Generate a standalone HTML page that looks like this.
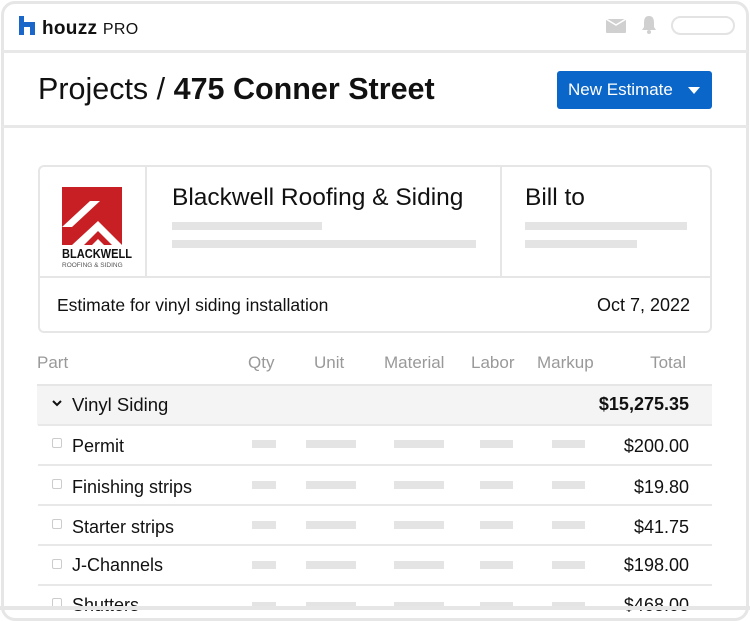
<!DOCTYPE html>
<html><head><style>
*{margin:0;padding:0;box-sizing:border-box}
body{width:750px;height:610px;background:#fff;font-family:"Liberation Sans",sans-serif;color:#111;position:relative;overflow:hidden}
.a{position:absolute}
.frame{position:absolute;left:1px;top:1px;width:748px;height:620px;border:3px solid #e6e6e6;border-radius:14px}
.hl{position:absolute;left:2px;width:746px;height:3px;background:#e8e8e8}
.bar{position:absolute;height:8px;background:#e4e4e4}
.t{position:absolute;white-space:nowrap}
.r{position:absolute;white-space:nowrap;right:61px;text-align:right;font-size:18px}
.row{position:absolute;left:38px;width:674px;height:2px;background:#e8e8e8}
.cb{position:absolute;left:52px;width:10px;height:10px;border:1px solid #ccc;border-radius:2px}
.hd{position:absolute;top:353px;font-size:17px;color:#999}
</style></head><body>
<div class="frame"></div>
<svg class="a" style="left:19px;top:16px" width="16" height="19" viewBox="0 0 16 19"><path d="M0 0H5V6H16V19H11V11H5V19H0Z" fill="#1a66c9"/></svg>
<div class="t" style="left:42px;top:18px;font-size:19px;font-weight:bold;letter-spacing:0.3px">houzz <span style="font-weight:normal;font-size:16px">PRO</span></div>
<div class="a" style="left:606px;top:19px;width:20px;height:14px;background:#d0d0d0;border-radius:1px"></div>
<svg class="a" style="left:606px;top:19px" width="20" height="14"><path d="M0 0L10 6L20 0" stroke="#fff" stroke-width="1.5" fill="none"/></svg>
<svg class="a" style="left:640px;top:15px" width="18" height="20" viewBox="0 0 18 20"><path d="M9 1C5 1 4 4 4 8V12L2 15H16L14 12V8C14 4 13 1 9 1Z" fill="#d0d0d0"/><circle cx="9" cy="17" r="2" fill="#d0d0d0"/></svg>
<div class="a" style="left:671px;top:16px;width:64px;height:19px;border:2px solid #e3e3e3;border-radius:10px"></div>
<div class="hl" style="top:50px"></div>
<div class="t" style="left:38px;top:72px;font-size:30.5px">Projects / <b>475 Conner Street</b></div>
<div class="a" style="left:557px;top:71px;width:155px;height:38px;background:#0a66c8;border-radius:3px"></div>
<div class="t" style="left:568px;top:80px;font-size:17px;color:#fff">New Estimate</div>
<svg class="a" style="left:688px;top:87px" width="12" height="7"><path d="M0 0H12L6 7Z" fill="#fff"/></svg>
<div class="hl" style="top:125px"></div>
<div class="a" style="left:38px;top:165px;width:674px;height:168px;border:2px solid #e6e6e6;border-radius:6px"></div>
<div class="a" style="left:40px;top:276px;width:670px;height:2px;background:#e6e6e6"></div>
<div class="a" style="left:145px;top:167px;width:2px;height:110px;background:#e6e6e6"></div>
<div class="a" style="left:500px;top:167px;width:2px;height:110px;background:#e6e6e6"></div>
<svg class="a" style="left:62px;top:187px" width="60" height="58" viewBox="0 0 60 58"><rect width="60" height="58" fill="#c81f25"/><path d="M0 40L28 14H38L10 40Z" fill="#fff"/><path d="M10 58L36 34L60 58H50L36 44L22 58Z" fill="#fff"/><path d="M30 58L36 52L42 58Z" fill="#fff"/></svg>
<div class="t" style="left:62px;top:246px;font-size:13px;font-weight:bold;transform:scaleX(0.85);transform-origin:left">BLACKWELL</div>
<div class="t" style="left:62px;top:262px;font-size:6.5px;color:#555">ROOFING &amp; SIDING</div>
<div class="t" style="left:172px;top:184px;font-size:24.5px">Blackwell Roofing &amp; Siding</div>
<div class="bar" style="left:172px;top:222px;width:150px"></div>
<div class="bar" style="left:172px;top:240px;width:304px"></div>
<div class="t" style="left:525px;top:184px;font-size:24.5px">Bill to</div>
<div class="bar" style="left:525px;top:222px;width:162px"></div>
<div class="bar" style="left:525px;top:240px;width:112px"></div>
<div class="t" style="left:57px;top:295px;font-size:17.5px">Estimate for vinyl siding installation</div>
<div class="r" style="top:295px;right:60px">Oct 7, 2022</div>
<div class="hd" style="left:37px">Part</div>
<div class="hd" style="left:248px">Qty</div>
<div class="hd" style="left:314px">Unit</div>
<div class="hd" style="left:384px">Material</div>
<div class="hd" style="left:471px">Labor</div>
<div class="hd" style="left:537px">Markup</div>
<div class="hd" style="right:64px">Total</div>
<div class="a" style="left:37px;top:384px;width:675px;height:41px;background:#f4f4f4;border-top:2px solid #e6e6e6"></div>
<svg class="a" style="left:52px;top:400px" width="10" height="7"><path d="M1 1L5 5L9 1" stroke="#111" stroke-width="2" fill="none"/></svg>
<div class="t" style="left:72px;top:394px;font-size:18.5px">Vinyl Siding</div>
<div class="r" style="top:394px;font-weight:bold">$15,275.35</div>
<div class="row" style="top:424px"></div>
<div class="row" style="top:464px"></div>
<div class="row" style="top:504px"></div>
<div class="row" style="top:544px"></div>
<div class="row" style="top:584px"></div>
<div class="cb" style="top:438px"></div><div class="t" style="left:72px;top:436px;font-size:18px">Permit</div><div class="r" style="top:436px">$200.00</div>
<div class="cb" style="top:479px"></div><div class="t" style="left:72px;top:477px;font-size:18px">Finishing strips</div><div class="r" style="top:477px">$19.80</div>
<div class="cb" style="top:519px"></div><div class="t" style="left:72px;top:517px;font-size:18px">Starter strips</div><div class="r" style="top:517px">$41.75</div>
<div class="cb" style="top:559px"></div><div class="t" style="left:72px;top:555px;font-size:18px">J-Channels</div><div class="r" style="top:555px">$198.00</div>
<div class="cb" style="top:598px"></div><div class="t" style="left:72px;top:595px;font-size:18px">Shutters</div><div class="r" style="top:595px">$468.00</div>
<div class="bar" style="left:252px;top:440px;width:24px"></div><div class="bar" style="left:306px;top:440px;width:50px"></div><div class="bar" style="left:394px;top:440px;width:50px"></div><div class="bar" style="left:480px;top:440px;width:33px"></div><div class="bar" style="left:552px;top:440px;width:33px"></div>
<div class="bar" style="left:252px;top:481px;width:24px"></div><div class="bar" style="left:306px;top:481px;width:50px"></div><div class="bar" style="left:394px;top:481px;width:50px"></div><div class="bar" style="left:480px;top:481px;width:33px"></div><div class="bar" style="left:552px;top:481px;width:33px"></div>
<div class="bar" style="left:252px;top:521px;width:24px"></div><div class="bar" style="left:306px;top:521px;width:50px"></div><div class="bar" style="left:394px;top:521px;width:50px"></div><div class="bar" style="left:480px;top:521px;width:33px"></div><div class="bar" style="left:552px;top:521px;width:33px"></div>
<div class="bar" style="left:252px;top:561px;width:24px"></div><div class="bar" style="left:306px;top:561px;width:50px"></div><div class="bar" style="left:394px;top:561px;width:50px"></div><div class="bar" style="left:480px;top:561px;width:33px"></div><div class="bar" style="left:552px;top:561px;width:33px"></div>
<div class="bar" style="left:252px;top:602px;width:24px"></div><div class="bar" style="left:306px;top:602px;width:50px"></div><div class="bar" style="left:394px;top:602px;width:50px"></div><div class="bar" style="left:480px;top:602px;width:33px"></div><div class="bar" style="left:552px;top:602px;width:33px"></div>
<div class="a" style="left:0;top:606px;width:750px;height:4px;background:#e6e6e6"></div>
</body></html>
